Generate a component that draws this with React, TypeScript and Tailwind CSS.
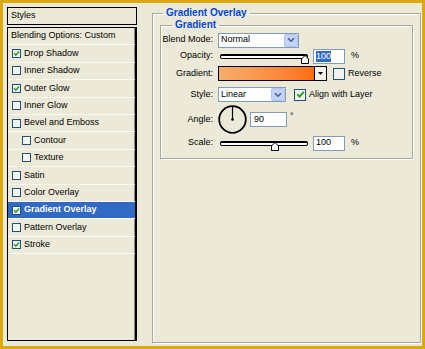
import React from 'react'

const font = "font-['Liberation_Sans',Arial,sans-serif]"

const styleRows = [
  { label: 'Drop Shadow', on: true },
  { label: 'Inner Shadow' },
  { label: 'Outer Glow', on: true },
  { label: 'Inner Glow' },
  { label: 'Bevel and Emboss' },
  { label: 'Contour', indent: true },
  { label: 'Texture', indent: true },
  { label: 'Satin' },
  { label: 'Color Overlay' },
  { label: 'Gradient Overlay', on: true, sel: true },
  { label: 'Pattern Overlay' },
  { label: 'Stroke', on: true },
]

function Tick({ size }: { size: number }) {
  return (
    <svg width={size} height={size} viewBox="0 0 8 8">
      <path d="M1.2 3.8 L3.2 5.9 L6.9 1.6" stroke="#21a121" strokeWidth="1.7" fill="none" />
    </svg>
  )
}

function SmallBox({ on }: { on?: boolean }) {
  return (
    <span className="w-[9px] h-[9px] shrink-0 border border-[#1c5180] bg-[#f5f4ee] flex items-center justify-center">
      {on && <Tick size={7} />}
    </span>
  )
}

function BigBox({ on }: { on?: boolean }) {
  return (
    <span className="w-[12px] h-[12px] shrink-0 border border-[#1c5180] bg-[#f3f2ec] flex items-center justify-center">
      {on && <Tick size={9} />}
    </span>
  )
}

function Chevron() {
  return (
    <span className="w-[14px] h-[13px] shrink-0 rounded-[2px] bg-[#c1d2fb] border border-[#b2c5f2] flex items-center justify-center">
      <svg width="8" height="6" viewBox="0 0 8 6">
        <path d="M1 1.2 L4 4.2 L7 1.2" stroke="#4d6185" strokeWidth="1.6" fill="none" />
      </svg>
    </span>
  )
}

function Thumb({ left }: { left: string }) {
  return (
    <svg width="8" height="9" viewBox="0 0 8 9" className={`absolute -top-[1px] ${left}`}>
      <path d="M0.5 4 L4 0.5 L7.5 4 L7.5 8.5 L0.5 8.5 Z" fill="#fff" stroke="#000" strokeWidth="1" />
    </svg>
  )
}

function Label({ children }: { children: React.ReactNode }) {
  return <span className="w-[52px] shrink-0 text-right mr-[5px]">{children}</span>
}

export default function App() {
  return (
    <div className={`w-[425px] h-[349px] border-[3px] border-[#d9aa0b] bg-[#ece9d8] flex items-start pt-[4px] pl-[4px] gap-[15px] text-[9px] text-black ${font}`}>
      {/* Styles list */}
      <div className="w-[130px] h-[334px] flex flex-col gap-[2px]">
        <div className="h-[18px] border border-black flex items-center pl-[3px]">Styles</div>
        <div className="flex-1 border border-black border-r-2 shadow-[inset_-1px_0_0_#8c8a7e]">
          <div className="h-[17.4px] border-b border-[#faf9f3] flex items-center pl-[3px]">Blending Options: Custom</div>
          {styleRows.map(r => (
            <div key={r.label}
                 className={`h-[17.4px] border-b border-[#faf9f3] flex items-center gap-[3px] ${r.indent ? 'pl-[14px]' : 'pl-[4px]'} ${r.sel ? 'bg-[#316ac5] text-white font-bold' : ''}`}>
              <SmallBox on={r.on} />
              <span>{r.label}</span>
            </div>
          ))}
        </div>
      </div>

      {/* Gradient Overlay panel */}
      <fieldset className="w-[269px] h-[336px] border border-[#a8a699] shadow-[inset_1px_1px_0_#fff,1px_1px_0_#fff]">
        <legend className="ml-[10px] px-[3px] leading-[12px] text-[10px] font-bold text-[#0046d5]">Gradient Overlay</legend>
        <fieldset className="mx-[7px] border border-[#a8a699] shadow-[inset_1px_1px_0_#fff,1px_1px_0_#fff]">
          <legend className="ml-[11px] px-[3px] leading-[12px] text-[10px] font-bold text-[#0046d5]">Gradient</legend>
          <div className="pt-[1px] pb-[5px] flex flex-col">
            <div className="h-[16px] flex items-center">
              <Label>Blend Mode:</Label>
              <div className="w-[81px] h-[15px] bg-white border border-[#7f9db9] flex items-center">
                <span className="flex-1 pl-[2px]">Normal</span>
                <Chevron />
              </div>
            </div>

            <div className="h-[16px] flex items-center">
              <Label>Opacity:</Label>
              <div className="relative ml-[2px] w-[88px] h-[5px] bg-white border border-black border-t-2 rounded-[2px]">
                <Thumb left="left-[80px]" />
              </div>
              <div className="ml-[5px] w-[32px] h-[15px] bg-white border border-[#7f9db9] flex items-center pl-[2px]">
                <span className="bg-[#316ac5] text-white leading-[11px]">100</span>
              </div>
              <span className="ml-[6px]">%</span>
            </div>

            <div className="h-[19px] flex items-center">
              <Label>Gradient:</Label>
              <div className="w-[97px] h-[15px] border border-black bg-gradient-to-r from-[#f5ae6c] to-[#ff6f00]" />
              <div className="w-[12px] h-[15px] border border-black border-l-0 bg-[#f2f1ea] flex items-center justify-center">
                <svg width="5" height="3" viewBox="0 0 5 3"><path d="M0 0 H5 L2.5 3 Z" fill="#000" /></svg>
              </div>
              <span className="ml-[6px]"><BigBox /></span>
              <span className="ml-[3px]">Reverse</span>
            </div>

            <div className="h-[23px] flex items-center">
              <Label>Style:</Label>
              <div className="w-[68px] h-[15px] bg-white border border-[#7f9db9] flex items-center">
                <span className="flex-1 pl-[2px]">Linear</span>
                <Chevron />
              </div>
              <span className="ml-[8px]"><BigBox on /></span>
              <span className="ml-[3px]">Align with Layer</span>
            </div>

            <div className="h-[27px] flex items-center">
              <Label>Angle:</Label>
              <svg width="29" height="29" viewBox="0 0 29 29" className="shrink-0 -my-[1px]">
                <circle cx="14.5" cy="14.5" r="13.3" stroke="#000" strokeWidth="1.8" fill="none" />
                <path d="M14.5 14.5 V2" stroke="#000" strokeWidth="1.2" />
                <circle cx="14.5" cy="14.5" r="1.3" fill="#000" />
              </svg>
              <div className="ml-[3px] w-[37px] h-[15px] bg-white border border-[#7f9db9] flex items-center pl-[3px]">90</div>
              <span className="ml-[3px] self-start mt-[4px]">°</span>
            </div>

            <div className="h-[20px] flex items-center">
              <Label>Scale:</Label>
              <div className="relative ml-[2px] w-[88px] h-[5px] bg-white border border-black border-t-2 rounded-[2px]">
                <Thumb left="left-[50px]" />
              </div>
              <div className="ml-[5px] w-[32px] h-[15px] bg-white border border-[#7f9db9] flex items-center pl-[2px]">100</div>
              <span className="ml-[6px]">%</span>
            </div>
          </div>
        </fieldset>
      </fieldset>
    </div>
  )
}
